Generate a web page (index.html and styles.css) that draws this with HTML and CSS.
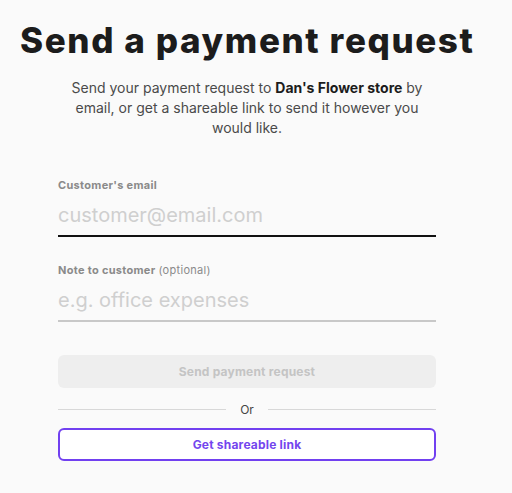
FILE: index.html
```html
<!DOCTYPE html>
<html lang="en">
<head>
  <meta charset="UTF-8" />
  <meta name="viewport" content="width=device-width, initial-scale=1.0"/>
  <title>Send a payment request</title>
  <link rel="stylesheet" href="styles.css">
</head>
<body>
  <div class="page">
    <h1>Send a payment request</h1>
    <p class="intro">Send your payment request to <b>Dan's Flower store</b> by email, or get a shareable link to send it however you would like.</p>

    <form class="request-form" onsubmit="return false">
      <label class="field">
        <span class="field-label">Customer's email</span>
        <input type="email" class="field-input active" placeholder="customer@email.com">
      </label>

      <label class="field">
        <span class="field-label">Note to customer <span class="optional">(optional)</span></span>
        <input type="text" class="field-input" placeholder="e.g. office expenses">
      </label>

      <button type="submit" class="btn btn-send" disabled>Send payment request</button>

      <div class="divider"><span>Or</span></div>

      <button type="button" class="btn btn-link">Get shareable link</button>
    </form>
  </div>
</body>
</html>
```

FILE: styles.css
```css
body {
  margin: 0;
  padding: 0;
  background-color: #fafafa;
  font-family: 'Inter', 'Open Sans', sans-serif;
  color: #222;
}

.page {
  width: 454px;
  margin-left: 20px;
  padding-top: 19px;
  text-align: center;
}

h1 {
  margin: 0;
  font-size: 35px;
  line-height: 42px;
  font-weight: 800;
  letter-spacing: 1.6px;
  color: #1c1c1c;
  white-space: nowrap;
}

.intro {
  width: 370px;
  margin: 17px auto 0;
  font-size: 14px;
  line-height: 20px;
  color: #4a4a4a;
}

.intro b {
  color: #1c1c1c;
}

.request-form {
  margin: 40px 38px 0;
  text-align: left;
}

.field {
  display: block;
  margin-bottom: 26px;
}

.field-label {
  display: block;
  font-size: 11px;
  font-weight: 700;
  letter-spacing: 0.3px;
  color: #8a8a8a;
}

.optional {
  font-weight: 400;
}

.field-input {
  display: block;
  width: 100%;
  box-sizing: border-box;
  margin-top: 6px;
  padding: 5px 0 8px;
  border: none;
  border-bottom: 2px solid #c8c8c8;
  background: transparent;
  font-family: inherit;
  font-size: 20px;
  color: #222;
  outline: none;
}

.field-input.active {
  border-bottom-color: #111;
}

.field-input::placeholder {
  color: #cfcfcf;
}

.btn {
  display: block;
  width: 100%;
  height: 33px;
  border-radius: 6px;
  font-family: inherit;
  font-size: 12px;
  font-weight: 700;
  letter-spacing: 0.2px;
  cursor: pointer;
}

.btn-send {
  margin-top: 33px;
  border: none;
  background-color: #eeeeee;
  color: #c4c4c4;
}

.divider {
  display: flex;
  align-items: center;
  gap: 14px;
  margin: 14px 0 11px;
  font-size: 12px;
  color: #444;
}

.divider::before,
.divider::after {
  content: '';
  flex: 1;
  height: 1px;
  background-color: #d8d8d8;
}

.btn-link {
  border: 2px solid #7140f0;
  background-color: #fff;
  color: #7346ee;
}
```
